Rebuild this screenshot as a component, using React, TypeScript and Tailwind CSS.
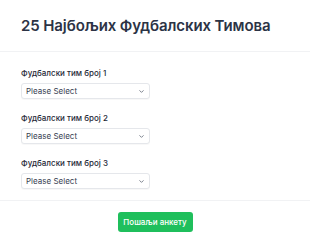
import React from "react"

const ChevronDown = () => (
    <svg width="7" height="7" viewBox="0 0 24 24" fill="none" stroke="#6b7280" strokeWidth="3" strokeLinecap="round" strokeLinejoin="round">
        <path d="M6 9l6 6 6-6" />
    </svg>
)

const SelectField = ({ label }: { label: string }) => (
    <div className="flex flex-col">
        <label className="text-[8px] leading-[10px] font-medium text-[#1f2937] mb-[5px]">{label}</label>
        <div className="w-[129px] h-[16px] border border-[#e5e7eb] rounded-[3px] bg-white flex items-center justify-between pl-[4px] pr-[4px] shadow-[0_1px_1px_rgba(0,0,0,0.03)]">
            <span className="text-[8px] leading-none text-[#374151]">Please Select</span>
            <ChevronDown />
        </div>
    </div>
)

export default function App() {
    return (
        <div className="w-[310px] h-[249px] bg-white overflow-hidden" style={{ fontFamily: "Inter, 'Noto Sans', sans-serif" }}>
            <div className="h-[51px] flex items-center px-[21px]">
                <h1 className="text-[15px] font-semibold text-[#2c3345] leading-none tracking-[-0.1px]">25 Најбољих Фудбалских Тимова</h1>
            </div>
            <div className="h-px bg-[#f1f2f4]" />
            <div className="px-[21px] pt-[16px] flex flex-col gap-[14px]">
                <SelectField label="Фудбалски тим број 1" />
                <SelectField label="Фудбалски тим број 2" />
                <SelectField label="Фудбалски тим број 3" />
            </div>
            <div className="h-px bg-[#f1f2f4] mt-[11px]" />
            <div className="flex justify-center pt-[11px]">
                <button className="w-[75px] h-[20px] rounded-[3px] bg-[#1fbf5c] text-white text-[8px] font-medium">Пошаљи анкету</button>
            </div>
        </div>
    )
}
